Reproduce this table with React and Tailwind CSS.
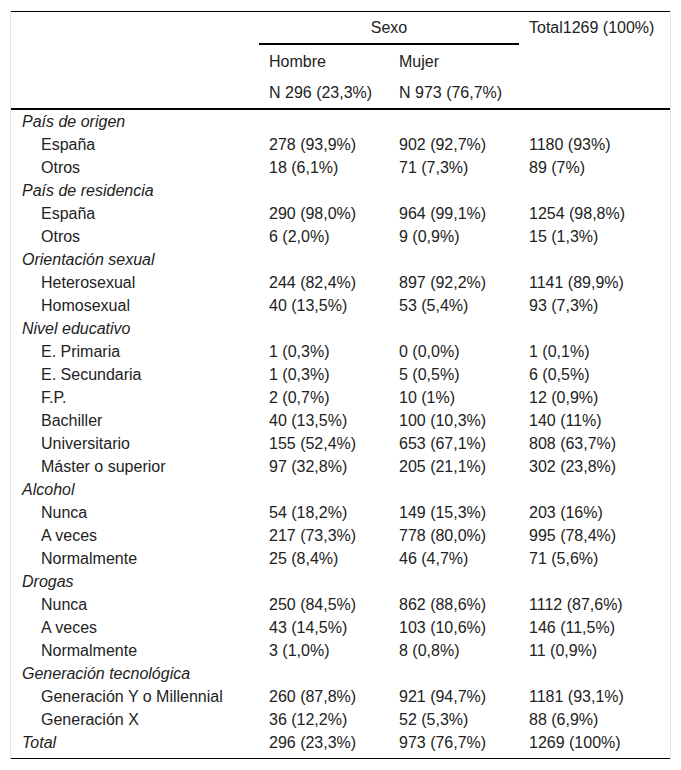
const groups = [
  {
    title: 'País de origen',
    rows: [
      ['España', '278 (93,9%)', '902 (92,7%)', '1180 (93%)'],
      ['Otros', '18 (6,1%)', '71 (7,3%)', '89 (7%)'],
    ],
  },
  {
    title: 'País de residencia',
    rows: [
      ['España', '290 (98,0%)', '964 (99,1%)', '1254 (98,8%)'],
      ['Otros', '6 (2,0%)', '9 (0,9%)', '15 (1,3%)'],
    ],
  },
  {
    title: 'Orientación sexual',
    rows: [
      ['Heterosexual', '244 (82,4%)', '897 (92,2%)', '1141 (89,9%)'],
      ['Homosexual', '40 (13,5%)', '53 (5,4%)', '93 (7,3%)'],
    ],
  },
  {
    title: 'Nivel educativo',
    rows: [
      ['E. Primaria', '1 (0,3%)', '0 (0,0%)', '1 (0,1%)'],
      ['E. Secundaria', '1 (0,3%)', '5 (0,5%)', '6 (0,5%)'],
      ['F.P.', '2 (0,7%)', '10 (1%)', '12 (0,9%)'],
      ['Bachiller', '40 (13,5%)', '100 (10,3%)', '140 (11%)'],
      ['Universitario', '155 (52,4%)', '653 (67,1%)', '808 (63,7%)'],
      ['Máster o superior', '97 (32,8%)', '205 (21,1%)', '302 (23,8%)'],
    ],
  },
  {
    title: 'Alcohol',
    rows: [
      ['Nunca', '54 (18,2%)', '149 (15,3%)', '203 (16%)'],
      ['A veces', '217 (73,3%)', '778 (80,0%)', '995 (78,4%)'],
      ['Normalmente', '25 (8,4%)', '46 (4,7%)', '71 (5,6%)'],
    ],
  },
  {
    title: 'Drogas',
    rows: [
      ['Nunca', '250 (84,5%)', '862 (88,6%)', '1112 (87,6%)'],
      ['A veces', '43 (14,5%)', '103 (10,6%)', '146 (11,5%)'],
      ['Normalmente', '3 (1,0%)', '8 (0,8%)', '11 (0,9%)'],
    ],
  },
  {
    title: 'Generación tecnológica',
    rows: [
      ['Generación Y o Millennial', '260 (87,8%)', '921 (94,7%)', '1181 (93,1%)'],
      ['Generación X', '36 (12,2%)', '52 (5,3%)', '88 (6,9%)'],
    ],
  },
]

function ValueCells({ values, extra = '' }) {
  return values.map((v, i) => (
    <td key={i} className={`pl-[10px] align-middle whitespace-nowrap ${extra}`}>
      {v}
    </td>
  ))
}

export default function App() {
  return (
    <div className="bg-white pt-[10px] px-[10px] pb-[10px] w-[681px] font-['Liberation_Sans',Arial,sans-serif] text-[16px] leading-[23px] text-[#222]">
      <div className="border-x border-[#e4e4e4] w-[661px]">
        <table className="border-collapse table-fixed w-[659px] mt-px">
          <colgroup>
            <col className="w-[248px]" />
            <col className="w-[130px]" />
            <col className="w-[130px]" />
            <col className="w-[151px]" />
          </colgroup>
          <thead>
            <tr className="h-[32px] border-t border-black">
              <th rowSpan={3} className="font-normal" />
              <th colSpan={2} className="font-normal text-center align-middle border-b-2 border-black h-[30px]">
                Sexo
              </th>
              <th rowSpan={3} className="font-normal text-left align-top pl-[10px] pt-[4px] whitespace-nowrap">
                Total1269 (100%)
              </th>
            </tr>
            <tr className="h-[34px]">
              <th className="font-normal text-left pl-[10px] align-middle">Hombre</th>
              <th className="font-normal text-left pl-[10px] align-middle">Mujer</th>
            </tr>
            <tr className="h-[31px] border-b-2 border-black">
              <th className="font-normal text-left pl-[10px] align-top pt-[3px] whitespace-nowrap">N 296 (23,3%)</th>
              <th className="font-normal text-left pl-[10px] align-top pt-[3px] whitespace-nowrap">N 973 (76,7%)</th>
            </tr>
          </thead>
          <tbody>
            {groups.map((g) => [
              <tr key={g.title} className="h-[23px]">
                <td colSpan={4} className="pl-[11px] italic">
                  {g.title}
                </td>
              </tr>,
              ...g.rows.map((r, i) => (
                <tr key={g.title + i} className="h-[23px]">
                  <td className="pl-[30px] whitespace-nowrap">{r[0]}</td>
                  <ValueCells values={r.slice(1)} />
                </tr>
              )),
            ])}
            <tr className="h-[28px] border-b border-black">
              <td className="pl-[11px] italic align-top">Total</td>
              <ValueCells values={['296 (23,3%)', '973 (76,7%)', '1269 (100%)']} extra="!align-top" />
            </tr>
          </tbody>
        </table>
      </div>
    </div>
  )
}
